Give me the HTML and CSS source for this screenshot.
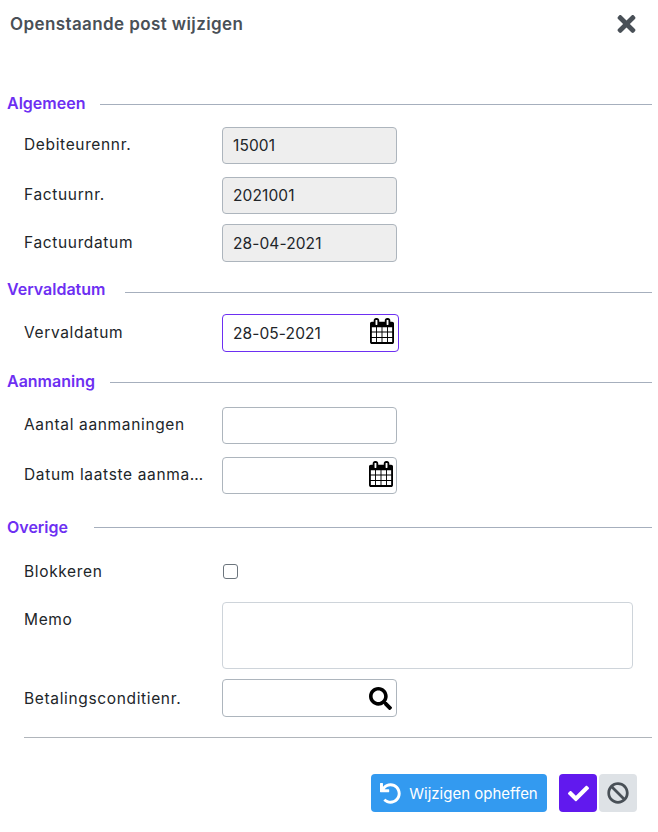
FILE: index.html
```html
<!DOCTYPE html>
<html lang="nl">
<head>
  <meta charset="UTF-8">
  <title>Openstaande post wijzigen</title>
  <link rel="stylesheet" href="styles.css">
</head>
<body>
  <div class="dialog">
    <header class="dialog-header">
      <h1>Openstaande post wijzigen</h1>
      <svg class="close-icon" viewBox="0 0 352 512"><path d="M242.72 256l100.07-100.07c12.28-12.28 12.28-32.19 0-44.48l-22.24-22.24c-12.28-12.28-32.19-12.28-44.48 0L176 189.28 75.93 89.21c-12.28-12.28-32.19-12.28-44.48 0L9.21 111.45c-12.28 12.28-12.28 32.19 0 44.48L109.28 256 9.21 356.07c-12.28 12.28-12.28 32.19 0 44.48l22.24 22.24c12.28 12.28 32.2 12.28 44.48 0L176 322.72l100.07 100.07c12.28 12.28 32.2 12.28 44.48 0l22.24-22.24c12.28-12.28 12.28-32.19 0-44.48L242.72 256z"/></svg>
    </header>

    <section class="group group-algemeen">
      <div class="legend"><span>Algemeen</span></div>
      <div class="row row-first"><label>Debiteurennr.</label><input class="input readonly" value="15001" readonly></div>
      <div class="row row-b"><label>Factuurnr.</label><input class="input readonly" value="2021001" readonly></div>
      <div class="row row-c"><label>Factuurdatum</label><input class="input readonly tall" value="28-04-2021" readonly></div>
    </section>

    <section class="group group-verval">
      <div class="legend"><span>Vervaldatum</span></div>
      <div class="row row-date">
        <label>Vervaldatum</label>
        <div class="input-icon active">
          <input value="28-05-2021">
          <svg class="cal-icon" viewBox="0 0 1664 1792"><use href="#cal"/></svg>
        </div>
      </div>
    </section>

    <section class="group group-aanmaning">
      <div class="legend"><span>Aanmaning</span></div>
      <div class="row row-aantal"><label>Aantal aanmaningen</label><input class="input"></div>
      <div class="row row-b">
        <label>Datum laatste aanmaning</label>
        <div class="input-icon">
          <input>
          <svg class="cal-icon" viewBox="0 0 1664 1792"><use href="#cal"/></svg>
        </div>
      </div>
    </section>

    <section class="group group-overige">
      <div class="legend"><span>Overige</span></div>
      <div class="row row-check"><label>Blokkeren</label><input class="check" type="checkbox"></div>
      <div class="row row-memo"><label>Memo</label><textarea class="memo"></textarea></div>
      <div class="row row-search">
        <label>Betalingsconditienr.</label>
        <div class="input-icon">
          <input>
          <svg class="search-icon" viewBox="0 0 512 512"><path d="M505 442.7L405.3 343c-4.5-4.5-10.6-7-17-7H372c27.6-35.3 44-79.7 44-128C416 93.1 322.9 0 208 0S0 93.1 0 208s93.1 208 208 208c48.3 0 92.7-16.4 128-44v16.3c0 6.4 2.5 12.5 7 17l99.7 99.7c9.4 9.4 24.6 9.4 33.9 0l28.3-28.3c9.4-9.4 9.4-24.6.1-34zM208 336c-70.7 0-128-57.2-128-128 0-70.7 57.2-128 128-128 70.7 0 128 57.2 128 128 0 70.7-57.2 128-128 128z"/></svg>
        </div>
      </div>
    </section>

    <hr class="divider">

    <footer class="actions">
      <button class="btn btn-undo">
        <svg viewBox="0 0 512 512"><path d="M212.333 224.333H12c-6.627 0-12-5.373-12-12V12C0 5.373 5.373 0 12 0h48c6.627 0 12 5.373 12 12v78.112C117.773 39.279 184.26 7.47 258.175 8.007c136.906.994 246.448 111.623 246.157 248.532C504.041 393.258 393.12 504 256.333 504c-64.089 0-122.496-24.313-166.51-64.215-5.099-4.622-5.334-12.554-.467-17.42l33.967-33.967c4.474-4.474 11.662-4.717 16.401-.525C170.76 415.336 211.58 432 256.333 432c97.268 0 176-78.716 176-176 0-97.267-78.716-176-176-176-58.496 0-110.28 28.476-142.274 72.333h98.274c6.627 0 12 5.373 12 12v48c0 6.627-5.373 12-12 12z"/></svg>
        Wijzigen opheffen
      </button>
      <button class="btn btn-ok">
        <svg viewBox="0 0 512 512"><path d="M173.898 439.404l-166.4-166.4c-9.997-9.997-9.997-26.206 0-36.204l36.203-36.204c9.997-9.998 26.207-9.998 36.204 0L192 312.69 432.095 72.596c9.997-9.997 26.207-9.997 36.204 0l36.203 36.204c9.997 9.997 9.997 26.206 0 36.204l-294.4 294.401c-9.998 9.997-26.207 9.997-36.204-.001z"/></svg>
      </button>
      <button class="btn btn-cancel">
        <svg viewBox="0 0 512 512"><path d="M256 8C119.034 8 8 119.033 8 256s111.034 248 248 248 248-111.034 248-248S392.967 8 256 8zm130.108 117.892c65.448 65.448 70 165.481 20.677 235.637L150.47 105.216c70.204-49.356 170.226-44.735 235.638 20.676zM125.892 386.108c-65.448-65.448-70-165.481-20.677-235.637L361.53 406.784c-70.203 49.356-170.226 44.736-235.638-20.676z"/></svg>
      </button>
    </footer>
  </div>

  <svg class="defs" width="0" height="0">
    <symbol id="cal" viewBox="0 0 1664 1792"><path d="M128 1664h288v-288h-288v288zm352 0h320v-288h-320v288zm-352-352h288v-320h-288v320zm352 0h320v-320h-320v320zm-352-384h288v-288h-288v288zm736 736h320v-288h-320v288zm-384-736h320v-288h-320v288zm768 736h288v-288h-288v288zm-384-352h320v-320h-320v320zm-352-864v-288q0-13-9.5-22.5t-22.5-9.5h-64q-13 0-22.5 9.5t-9.5 22.5v288q0 13 9.5 22.5t22.5 9.5h64q13 0 22.5-9.5t9.5-22.5zm736 864h288v-320h-288v320zm-384-384h320v-288h-320v288zm384 0h288v-288h-288v288zm32-480v-288q0-13-9.5-22.5t-22.5-9.5h-64q-13 0-22.5 9.5t-9.5 22.5v288q0 13 9.5 22.5t22.5 9.5h64q13 0 22.5-9.5t9.5-22.5zm384-64v1280q0 52-38 90t-90 38h-1408q-52 0-90-38t-38-90v-1280q0-52 38-90t90-38h128v-96q0-66 47-113t113-47h64q66 0 113 47t47 113v96h384v-96q0-66 47-113t113-47h64q66 0 113 47t47 113v96h128q52 0 90 38t38 90z"/></symbol>
  </svg>
</body>
</html>
```

FILE: styles.css
```css
:root {
  --purple: #6d2ff2;
  --line: #a6afbd;
  --border: #adb5bd;
  --text: #212529;
}

* {
  margin: 0;
  padding: 0;
  box-sizing: border-box;
}

body {
  font-family: Inter, "Noto Sans", sans-serif;
  font-size: 15.5px;
  letter-spacing: 0.65px;
  color: var(--text);
  background: #fff;
  overflow: hidden;
}

.dialog {
  width: 658px;
  height: 832px;
  padding: 0 6px;
}

.dialog-header {
  height: 48px;
  display: flex;
  align-items: center;
  justify-content: space-between;
  padding: 0 16px 0 4px;
}

.dialog-header h1 {
  font-size: 17px;
  font-weight: 600;
  letter-spacing: 0.4px;
  color: #495057;
}

.close-icon {
  width: 19px;
  height: 26px;
  fill: #495057;
}

.group-algemeen { margin-top: 46px; }
.group-verval { margin-top: 18px; }
.group-aanmaning { margin-top: 20px; }
.group-overige { margin-top: 24px; }

.legend {
  display: flex;
  align-items: center;
  gap: 15px;
  height: 18px;
  padding-left: 1px;
  font-size: 16px;
  font-weight: 600;
  letter-spacing: 0;
  color: var(--purple);
}

.legend::after {
  content: "";
  flex: 1;
  height: 1px;
  margin-top: 2px;
  background: var(--line);
}

.group-verval .legend { gap: 20px; }
.group-verval .legend::after { margin-top: 6px; }
.group-overige .legend { gap: 26px; }
.group-overige .legend::after { margin-top: 0; }

.row {
  display: flex;
  align-items: center;
  padding-left: 18px;
}

.row label {
  width: 198px;
  flex: none;
  padding-right: 10px;
  padding-bottom: 2px;
  white-space: nowrap;
  overflow: hidden;
  text-overflow: ellipsis;
}

.row-check label,
.row-search label {
  padding-bottom: 0;
}

.row-first { margin-top: 15px; }
.row-b { margin-top: 13px; }
.row-c { margin-top: 10px; }
.row-date { margin-top: 16px; }
.row-aantal { margin-top: 17px; }
.row-check { margin-top: 26px; }
.row-memo { margin-top: 21px; align-items: flex-start; }
.row-search { margin-top: 10px; }

.row-memo label { padding-top: 8px; }

input, textarea {
  font: inherit;
  letter-spacing: 0.1px;
  color: var(--text);
}

.input {
  width: 175px;
  height: 37px;
  padding: 0 10px;
  border: 1px solid var(--border);
  border-radius: 4px;
  outline: none;
}

.input.tall { height: 38px; }

.readonly { background: #eeeeee; }

.input-icon {
  width: 175px;
  height: 37px;
  display: flex;
  align-items: center;
  padding: 0 3px 0 10px;
  border: 1px solid var(--border);
  border-radius: 4px;
}

.row-search .input-icon {
  height: 38px;
  padding-right: 4px;
}

.input-icon input {
  flex: 1;
  min-width: 0;
  border: 0;
  outline: none;
  background: none;
}

.input-icon.active {
  width: 177px;
  height: 38px;
  padding-right: 4px;
  border-color: var(--purple);
}

.cal-icon {
  width: 24px;
  height: 26px;
  margin-bottom: 4px;
  flex: none;
  fill: #000;
}

.search-icon {
  width: 23px;
  height: 23px;
  flex: none;
  fill: #000;
}

.check {
  appearance: none;
  width: 15px;
  height: 15px;
  margin-left: 1px;
  border: 1px solid #6c757d;
  border-radius: 3px;
  background: #fff;
}

.memo {
  width: 411px;
  height: 67px;
  border: 1px solid #ced4da;
  border-radius: 4px;
  resize: none;
  outline: none;
}

.divider {
  margin: 20px 0 0 18px;
  border: 0;
  border-top: 1px solid #b0b5bb;
}

.actions {
  display: flex;
  margin-top: 36px;
  padding-right: 15px;
  justify-content: flex-end;
}

.btn {
  height: 38px;
  border: 0;
  border-radius: 4px;
  display: flex;
  align-items: center;
  justify-content: center;
  font: inherit;
  font-size: 15px;
  letter-spacing: 0;
}

.btn-undo {
  width: 176px;
  gap: 8px;
  margin-right: 12px;
  background: #339af0;
  color: #fff;
}

.btn-undo svg {
  width: 21px;
  height: 21px;
  fill: #fff;
}

.btn-ok {
  width: 38px;
  margin-right: 2px;
  background: #6119ee;
}

.btn-ok svg {
  width: 21px;
  height: 21px;
  fill: #fff;
}

.btn-cancel {
  width: 38px;
  background: #dee2e6;
}

.btn-cancel svg {
  width: 22px;
  height: 22px;
  fill: #495057;
}

.defs {
  position: absolute;
}
```
